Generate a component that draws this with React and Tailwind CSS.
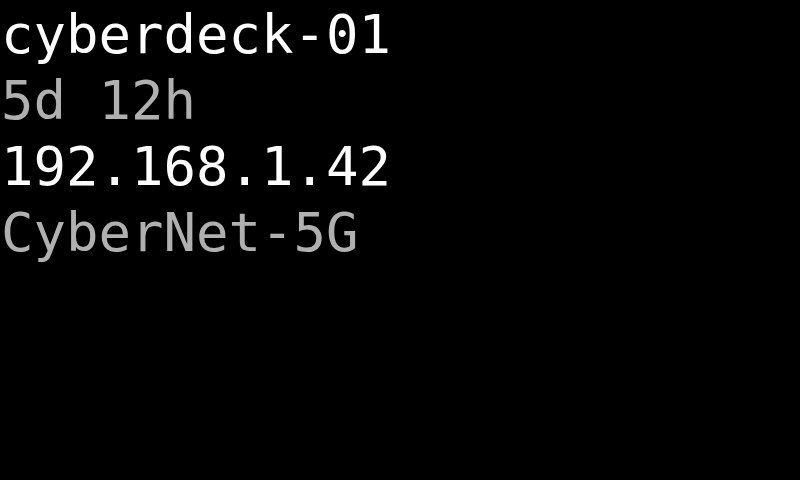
export default function App() {
  const lines = [
    { text: "cyberdeck-01", color: "text-white" },
    { text: "5d 12h", color: "text-[#b0b0b0]" },
    { text: "192.168.1.42", color: "text-white" },
    { text: "CyberNet-5G", color: "text-[#b0b0b0]" },
  ];

  return (
    <div className="w-[800px] h-[480px] bg-black overflow-hidden pt-[2px] pl-[1px] font-['DejaVu_Sans_Mono',monospace] text-[54px] leading-[66px]">
      {lines.map((line) => (
        <div key={line.text} className={line.color + " whitespace-pre"}>
          {line.text}
        </div>
      ))}
    </div>
  );
}
